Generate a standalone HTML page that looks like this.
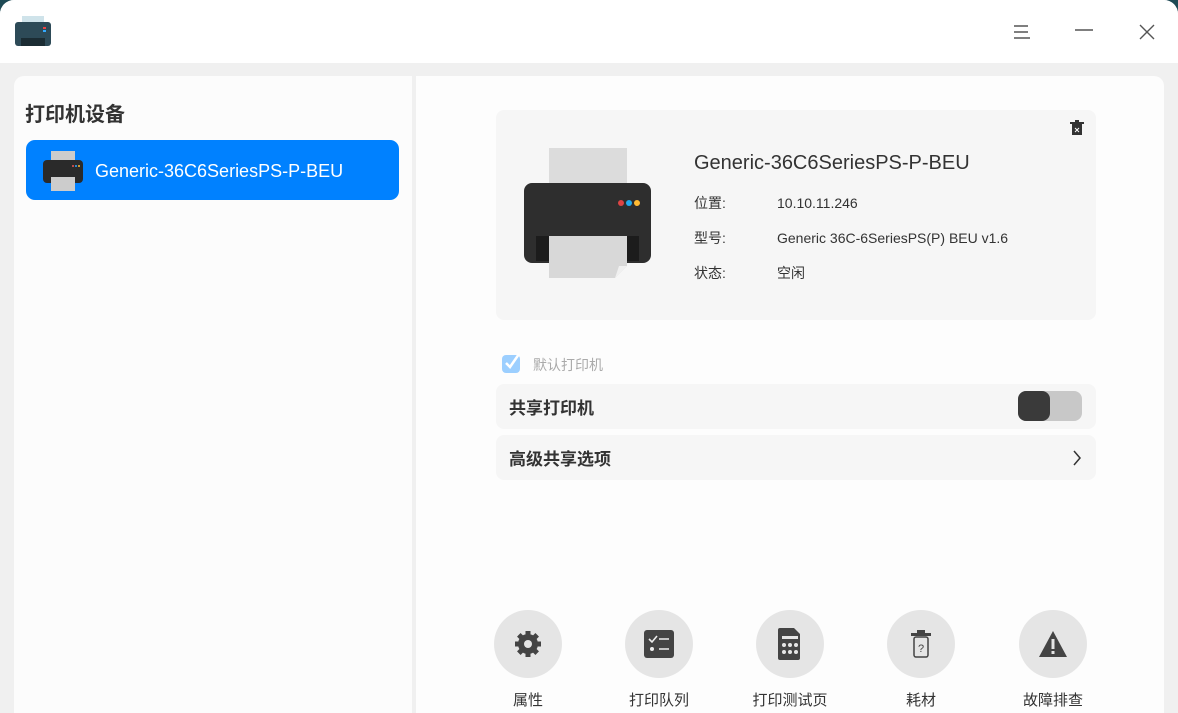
<!DOCTYPE html><html><head><meta charset="utf-8"><style>
*{margin:0;padding:0;box-sizing:border-box}
body{width:1178px;height:713px;background:#1e4a55;font-family:"Liberation Sans","Noto Sans CJK SC",sans-serif;overflow:hidden;position:relative;color:#333}
.win{position:absolute;left:0;top:0;width:1178px;height:713px;background:#f0f0f0;border-radius:14px 14px 0 0;overflow:hidden}
.tb{position:absolute;left:0;top:0;width:1178px;height:63px;background:#fff}
.lp{position:absolute;left:14px;top:76px;width:398px;height:640px;background:#fcfcfc;border-radius:10px 0 0 0}
.rp{position:absolute;left:416px;top:76px;width:748px;height:640px;background:#fdfdfd;border-radius:0 10px 0 0}
.abs{position:absolute}
.card{background:#f6f6f6;border-radius:8px}
.btn{position:absolute;top:610px;width:68px;height:68px;border-radius:50%;background:#e5e5e5;display:flex;align-items:center;justify-content:center}
.lbl{position:absolute;top:689px;width:120px;text-align:center;font-size:15px;color:#333}
</style></head><body><div class="win">
<div class="tb">
<svg class="abs" style="left:15px;top:16px" width="36" height="32"><rect x="7" y="0" width="22" height="8" fill="#cfe3ea"/><rect x="0" y="6" width="36" height="24" rx="3" fill="#2d4a57"/><rect x="6" y="22" width="24" height="8" fill="#1b2c33"/><rect x="28" y="11" width="3" height="2" fill="#e44"/><rect x="28" y="14" width="3" height="2" fill="#3af"/></svg>
<svg class="abs" style="left:1013px;top:24px" width="18" height="16"><path d="M1 2h14M1 8h14M1 14h16" stroke="#555" stroke-width="1.4"/></svg>
<svg class="abs" style="left:1074px;top:24px" width="20" height="10"><path d="M1 6h18" stroke="#555" stroke-width="1.4"/></svg>
<svg class="abs" style="left:1139px;top:24px" width="16" height="16"><path d="M1 1l14 14M15 1L1 15" stroke="#555" stroke-width="1.4"/></svg>
</div>
<div class="lp">
<div class="abs" style="left:11px;top:22px;font-size:20px;font-weight:bold;color:#333">打印机设备</div>
<div class="abs" style="left:12px;top:64px;width:373px;height:60px;background:#0081ff;border-radius:9px">
<svg class="abs" style="left:17px;top:11px" width="40" height="40"><rect x="8" y="0" width="24" height="10" fill="#ccc"/><rect x="0" y="9" width="40" height="23" rx="4" fill="#2a2a2a"/><rect x="8" y="26" width="24" height="14" fill="#ccc"/><circle cx="30" cy="15" r="1" fill="#e55"/><circle cx="33" cy="15" r="1" fill="#3af"/><circle cx="36" cy="15" r="1" fill="#fb3"/></svg>
<div class="abs" style="left:69px;top:21px;font-size:18px;color:#fff">Generic-36C6SeriesPS-P-BEU</div>
</div></div>
<div class="rp"></div>
<div class="abs card" style="left:496px;top:110px;width:600px;height:210px">
<svg class="abs" style="left:28px;top:38px" width="130" height="136"><rect x="25" y="0" width="78" height="40" fill="#dcdcdc"/><rect x="0" y="35" width="127" height="80" rx="8" fill="#2e2e2e"/><rect x="12" y="88" width="103" height="25" fill="#1c1c1c"/><path d="M25 88h78v30l-12 12H25z" fill="#d8d8d8"/><path d="M91 130l12-12h-8z" fill="#f0f0f0"/><circle cx="97" cy="55" r="3" fill="#d44"/><circle cx="105" cy="55" r="3" fill="#2ae"/><circle cx="113" cy="55" r="3" fill="#fb3"/></svg>
<svg class="abs" style="left:574px;top:10px" width="14" height="16"><rect x="2" y="4" width="10" height="11" fill="#333"/><rect x="0" y="2" width="14" height="2" fill="#333"/><rect x="5" y="0" width="4" height="2" fill="#333"/><path d="M5 8l4 4M9 8l-4 4" stroke="#fff" stroke-width="1"/></svg>
<div class="abs" style="left:198px;top:42px;font-size:20px;color:#333">Generic-36C6SeriesPS-P-BEU</div>
<div class="abs" style="left:198px;top:84px;font-size:14px;line-height:18px">位置:</div><div class="abs" style="left:281px;top:84px;font-size:14px;line-height:18px">10.10.11.246</div>
<div class="abs" style="left:198px;top:119px;font-size:14px;line-height:18px">型号:</div><div class="abs" style="left:281px;top:119px;font-size:14px;line-height:18px">Generic 36C-6SeriesPS(P) BEU v1.6</div>
<div class="abs" style="left:198px;top:154px;font-size:14px;line-height:18px">状态:</div><div class="abs" style="left:281px;top:154px;font-size:14px;line-height:18px">空闲</div>
</div>
<svg class="abs" style="left:501px;top:352px" width="22" height="22"><rect x="1" y="3" width="18" height="18" rx="4" fill="#9ccfff"/><path d="M5 11l4 4 9-13" stroke="#fff" stroke-width="2.5" fill="none"/></svg>
<div class="abs" style="left:533px;top:355px;font-size:14px;color:#aaa">默认打印机</div>
<div class="abs card" style="left:496px;top:384px;width:600px;height:45px"><div class="abs" style="left:13px;top:10px;font-size:17px;font-weight:bold">共享打印机</div>
<div class="abs" style="left:522px;top:7px;width:64px;height:30px;border-radius:8px;background:#c8c8c8"><div style="width:32px;height:30px;border-radius:8px;background:#3a3a3a"></div></div></div>
<div class="abs card" style="left:496px;top:435px;width:600px;height:45px"><div class="abs" style="left:13px;top:10px;font-size:17px;font-weight:bold">高级共享选项</div>
<svg class="abs" style="left:576px;top:14px" width="10" height="18"><path d="M2 2l6 7-6 7" stroke="#333" stroke-width="1.5" fill="none"/></svg></div>
<div class="btn" style="left:494px"><svg width="32" height="32" viewBox="0 0 32 32"><circle cx="16" cy="16" r="10" fill="#444"/><g fill="#444"><rect x="13.5" y="3" width="5" height="6"/><rect x="13.5" y="23" width="5" height="6"/><rect x="3" y="13.5" width="6" height="5"/><rect x="23" y="13.5" width="6" height="5"/><rect x="13.5" y="3" width="5" height="6" transform="rotate(45 16 16)"/><rect x="13.5" y="23" width="5" height="6" transform="rotate(45 16 16)"/><rect x="3" y="13.5" width="6" height="5" transform="rotate(45 16 16)"/><rect x="23" y="13.5" width="6" height="5" transform="rotate(45 16 16)"/></g><circle cx="16" cy="16" r="4" fill="#e5e5e5"/></svg></div>
<div class="btn" style="left:625px"><svg width="30" height="28"><rect x="0" y="0" width="30" height="28" rx="3" fill="#444"/><path d="M5 9l3 3 5-6M15 9h10M15 19h10" stroke="#eee" stroke-width="1.6" fill="none"/><circle cx="8" cy="19" r="2" fill="#eee"/></svg></div>
<div class="btn" style="left:756px"><svg width="26" height="32"><path d="M3 0h14l6 6v24a2 2 0 0 1-2 2H3a2 2 0 0 1-2-2V2a2 2 0 0 1 2-2z" fill="#444"/><rect x="5" y="8" width="16" height="3" fill="#e5e5e5"/><g fill="#e5e5e5"><circle cx="7" cy="17" r="2"/><circle cx="13" cy="17" r="2"/><circle cx="19" cy="17" r="2"/><circle cx="7" cy="24" r="2"/><circle cx="13" cy="24" r="2"/><circle cx="19" cy="24" r="2"/></g></svg></div>
<div class="btn" style="left:887px"><svg width="20" height="30"><rect x="0" y="4" width="20" height="3" fill="#444"/><rect x="6" y="1" width="8" height="3" fill="#444"/><rect x="3" y="8" width="14" height="20" rx="2" fill="none" stroke="#444" stroke-width="1.5"/><text x="10" y="23" font-size="11" text-anchor="middle" fill="#444" font-family="Liberation Sans">?</text></svg></div>
<div class="btn" style="left:1019px"><svg width="30" height="28"><path d="M15 1L29 27H1z" fill="#444"/><rect x="13.5" y="9" width="3" height="10" fill="#e5e5e5"/><rect x="13.5" y="21" width="3" height="3" fill="#e5e5e5"/></svg></div>
<div class="lbl" style="left:468px">属性</div>
<div class="lbl" style="left:599px">打印队列</div>
<div class="lbl" style="left:730px">打印测试页</div>
<div class="lbl" style="left:861px">耗材</div>
<div class="lbl" style="left:993px">故障排查</div>
</div></body></html>
